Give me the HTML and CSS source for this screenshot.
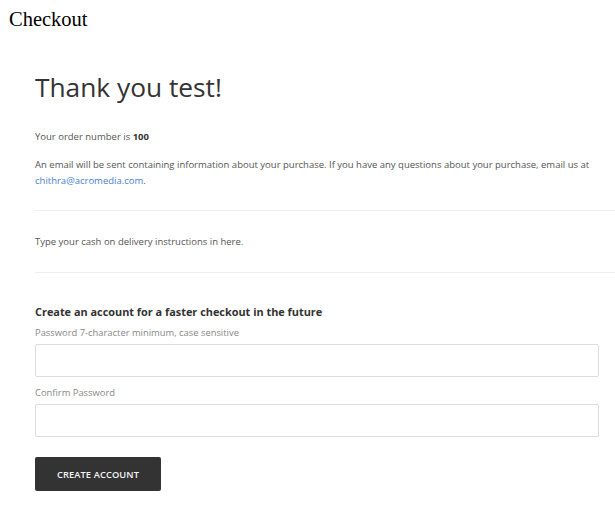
FILE: index.html
```html
<!DOCTYPE html>
<html>
<head>
<meta charset="utf-8">
<link rel="stylesheet" href="styles.css">
</head>
<body>
<div class="page-title">Checkout</div>
<main class="content">
  <h1 class="thanks">Thank you test!</h1>
  <p class="msg">Your order number is <strong>100</strong></p>
  <p class="msg">An email will be sent containing information about your purchase. If you have any questions about your purchase, email us at <a href="#">chithra@acromedia.com</a>.</p>
  <div class="divider first"></div>
  <p class="msg instructions">Type your cash on delivery instructions in here.</p>
  <div class="divider second"></div>
  <form class="account">
    <h2 class="account-title">Create an account for a faster checkout in the future</h2>
    <label class="field-label">Password 7-character minimum, case sensitive</label>
    <input class="field" type="password">
    <label class="field-label">Confirm Password</label>
    <input class="field" type="password">
    <button class="btn" type="button">CREATE ACCOUNT</button>
  </form>
</main>
</body>
</html>
```
FILE: styles.css
```css
html { overflow-x: hidden; }
body {
  margin: 8px 0 8px 9px;
  font-family: "Liberation Serif", serif;
  background: #fff;
}
.page-title {
  font-size: 20.5px;
  line-height: 23px;
  color: #000;
}
.content {
  padding-left: 26px;
  font-family: "Open Sans", sans-serif;
  color: #444;
}
.thanks {
  margin: 38px 0 0;
  font-size: 26.3px;
  font-weight: 400;
  line-height: 36px;
  color: #333;
}
.msg {
  margin: 0;
  font-size: 9.5px;
  line-height: 16px;
  color: #555;
}
.thanks + .msg { margin-top: 24px; }
.msg + .msg { margin-top: 12px; }
.msg strong { color: #333; font-weight: 700; }
.msg a { color: #4a7fd0; text-decoration: none; }
.divider {
  height: 1px;
  background: #eee;
}
.divider.first { margin: 21px 0 23px; }
.divider.second { margin: 22px 0 22px; }
.instructions { margin: 0; }
.account {
  display: flex;
  flex-direction: column;
  align-items: flex-start;
  padding-top: 9px;
}
.account-title {
  margin: 0;
  font-size: 10.9px;
  line-height: 16px;
  font-weight: 700;
  color: #333;
}
.field-label {
  margin-top: 6px;
  font-size: 9.4px;
  line-height: 14px;
  color: #888;
}
.field {
  margin-top: 4px;
  width: 564px;
  height: 33px;
  box-sizing: border-box;
  border: 1px solid #ddd;
  border-radius: 2px;
  background: #fff;
  margin-bottom: 9px;
}
.field + .field-label { margin-top: 0; }
.btn {
  margin-top: 11px;
  width: 126px;
  height: 34px;
  border: 0;
  border-radius: 2px;
  background: #333;
  color: #f4f4f4;
  font-family: "Open Sans", sans-serif;
  font-size: 9.3px;
  font-weight: 600;
  letter-spacing: 0.1px;
}
```
